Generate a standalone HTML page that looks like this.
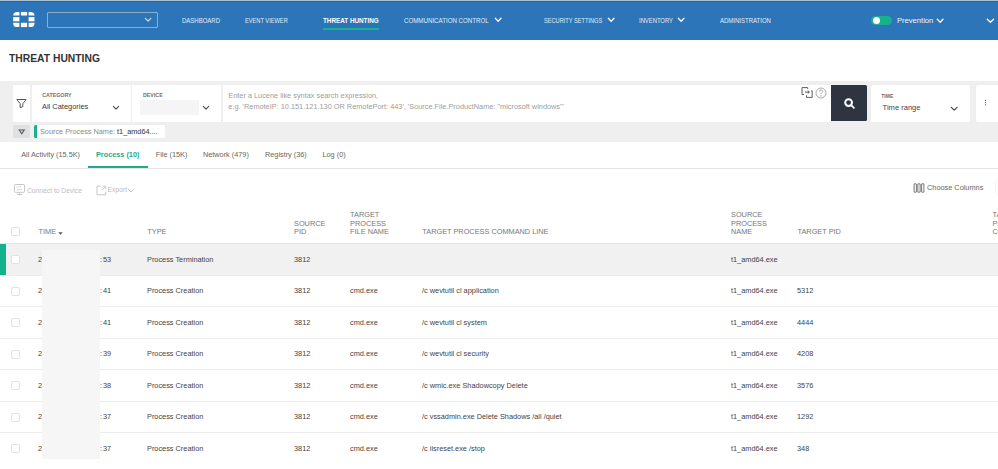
<!DOCTYPE html>
<html><head><meta charset="utf-8">
<style>
*{box-sizing:border-box;margin:0;padding:0}
html,body{width:998px;height:469px;overflow:hidden;background:#fff;font-family:"Liberation Sans",sans-serif;color:#444}
.a{position:absolute;white-space:nowrap}
#hdr{position:absolute;left:0;top:0;width:998px;height:40px;background:#2c75b8;border-top:1px solid #aac2d8;box-shadow:inset 0 1px 0 #1d66b1}
.nav{position:absolute;top:15.7px;font-size:7.4px;line-height:9px;transform-origin:0 0;white-space:nowrap}
.box{position:absolute;background:#fff;top:85px;height:36.5px}
.lbl{position:absolute;font-size:5.5px;font-weight:bold;color:#666;line-height:7px;white-space:nowrap}
.tab{position:absolute;top:150.1px;font-size:7.3px;color:#666;line-height:10px;white-space:nowrap}
.th{position:absolute;font-size:7.35px;color:#777;line-height:8.2px;white-space:nowrap}
.row{position:absolute;left:0;width:998px;border-bottom:1px solid #ececec}
.td{position:absolute;font-size:7.35px;color:#444;line-height:10px;white-space:nowrap}
.cb{position:absolute;left:10.5px;width:9px;height:9px;border:1px solid #e2e2e2;border-radius:2px;background:#fff}
</style></head><body>
<div id="hdr"></div>

<svg class="a" style="left:13px;top:11px" width="23" height="18" viewBox="0 0 23 18">
 <g fill="#fff">
  <path d="M4.2 0.9 H6.4 V4.5 H0.2 V4.6 Q0.2 0.9 4.2 0.9Z"/>
  <rect x="7.9" y="0.9" width="6.2" height="3.6"/>
  <path d="M15.6 0.9 H17.5 Q21.5 0.9 21.5 4.6 V4.5 H15.6Z"/>
  <rect x="0.2" y="6.1" width="6.2" height="4.2"/>
  <rect x="15.6" y="6.1" width="5.9" height="4.2"/>
  <path d="M0.2 11.8 H6.4 V16.1 H4.2 Q0.2 16.1 0.2 12.4Z"/>
  <rect x="7.9" y="11.8" width="6.2" height="4.3"/>
  <path d="M15.6 11.8 H21.5 V12.4 Q21.5 16.1 17.5 16.1 H15.6Z"/>
 </g></svg>
<div class="a" style="left:46.5px;top:12.3px;width:111.3px;height:16.2px;border:1px solid #8eaed0;border-radius:1px"></div>
<svg class="a" style="left:144.4px;top:16.9px" width="8.2" height="5.4" viewBox="-1 -1 8.2 5.4"><path d="M0.3 0.3 L3.1 3.1 L5.9 0.3" fill="none" stroke="#d5e2f0" stroke-width="1.1" stroke-linecap="round" stroke-linejoin="round"/></svg>
<div class="nav" style="left:181.6px;color:#e3ecf6;font-weight:normal;transform:scaleX(0.811)">DASHBOARD</div>
<div class="nav" style="left:244.6px;color:#e3ecf6;font-weight:normal;transform:scaleX(0.767)">EVENT VIEWER</div>
<div class="nav" style="left:323px;color:#fff;font-weight:bold;transform:scaleX(0.855)">THREAT HUNTING</div>
<div class="a" style="left:323px;top:27.5px;width:56px;height:2px;background:#19b48f"></div>
<div class="nav" style="left:403.8px;color:#e3ecf6;font-weight:normal;transform:scaleX(0.833)">COMMUNICATION CONTROL</div>
<svg class="a" style="left:494px;top:17.3px" width="8.3" height="5.5" viewBox="-1 -1 8.3 5.5"><path d="M0.3 0.3 L3.15 3.2 L6.0 0.3" fill="none" stroke="#fff" stroke-width="1.3" stroke-linecap="round" stroke-linejoin="round"/></svg>
<div class="nav" style="left:543.7px;color:#e3ecf6;font-weight:normal;transform:scaleX(0.764)">SECURITY SETTINGS</div>
<svg class="a" style="left:606.8px;top:17.3px" width="8.3" height="5.5" viewBox="-1 -1 8.3 5.5"><path d="M0.3 0.3 L3.15 3.2 L6.0 0.3" fill="none" stroke="#fff" stroke-width="1.3" stroke-linecap="round" stroke-linejoin="round"/></svg>
<div class="nav" style="left:638.9px;color:#e3ecf6;font-weight:normal;transform:scaleX(0.792)">INVENTORY</div>
<svg class="a" style="left:677px;top:17.3px" width="8.3" height="5.5" viewBox="-1 -1 8.3 5.5"><path d="M0.3 0.3 L3.15 3.2 L6.0 0.3" fill="none" stroke="#fff" stroke-width="1.3" stroke-linecap="round" stroke-linejoin="round"/></svg>
<div class="nav" style="left:720.4px;color:#e3ecf6;font-weight:normal;transform:scaleX(0.813)">ADMINISTRATION</div>
<div class="a" style="left:870.6px;top:15.8px;width:21.5px;height:9px;border-radius:4.5px;background:#17b28c"></div>
<div class="a" style="left:873px;top:16.8px;width:7px;height:7px;border-radius:50%;background:#fff"></div>
<div class="a" style="left:897px;top:15.5px;font-size:7.6px;color:#f2f6fb;line-height:10px">Prevention</div>
<svg class="a" style="left:935.7px;top:17.7px" width="8.3" height="5.5" viewBox="-1 -1 8.3 5.5"><path d="M0.3 0.3 L3.15 3.2 L6.0 0.3" fill="none" stroke="#fff" stroke-width="1.3" stroke-linecap="round" stroke-linejoin="round"/></svg>
<svg class="a" style="left:986.2px;top:17.7px" width="8.9" height="5.6" viewBox="-1 -1 8.9 5.6"><path d="M0.3 0.3 L3.45 3.3000000000000003 L6.6000000000000005 0.3" fill="none" stroke="#fff" stroke-width="1.3" stroke-linecap="round" stroke-linejoin="round"/></svg>
<div class="a" style="left:8.7px;top:50.5px;font-size:11.2px;font-weight:bold;color:#333;line-height:14px;transform-origin:0 0;transform:scaleX(0.922)">THREAT HUNTING</div>
<div class="a" style="left:0;top:81px;width:998px;height:61px;background:#efefef"></div>
<div class="box" style="left:13px;width:17px;border-radius:1px"></div>
<svg class="a" style="left:16px;top:97.5px" width="11" height="12" viewBox="0 0 11 12"><path d="M0.9 1.5 H10.1 Q9.8 2.2 6.8 5.6 V8.5 L4.2 9.7 V5.6 Q1.2 2.2 0.9 1.5 Z" fill="none" stroke="#555" stroke-width="1" stroke-linejoin="round"/></svg>
<div class="box" style="left:32px;width:99px"></div>
<div class="lbl" style="left:42.2px;top:91.8px;font-size:5.3px;color:#707070">CATEGORY</div>
<div class="a" style="left:42px;top:102.4px;font-size:7.45px;color:#3a3a3a;line-height:10px">All Categories</div>
<svg class="a" style="left:111.5px;top:104.6px" width="8" height="5.5" viewBox="-1 -1 8 5.5"><path d="M0.3 0.3 L3.0 3.2 L5.7 0.3" fill="none" stroke="#4a4a4a" stroke-width="1.05" stroke-linecap="round" stroke-linejoin="round"/></svg>
<div class="box" style="left:132px;width:89px"></div>
<div class="lbl" style="left:143px;top:91.8px;font-size:5.3px;color:#707070">DEVICE</div>
<div class="a" style="left:140px;top:100.4px;width:58.6px;height:14.3px;background:#f5f5f5;border-radius:1px"></div>
<svg class="a" style="left:201.7px;top:104.6px" width="8" height="5.5" viewBox="-1 -1 8 5.5"><path d="M0.3 0.3 L3.0 3.2 L5.7 0.3" fill="none" stroke="#4a4a4a" stroke-width="1.05" stroke-linecap="round" stroke-linejoin="round"/></svg>
<div class="box" style="left:223px;width:608.2px"></div>
<div class="a" style="left:228.3px;top:89.5px;font-size:7.35px;color:#9d9d9d;line-height:11.3px">Enter a Lucene like syntax search expression,<br>e.g. 'RemoteIP: 10.151.121.130 OR RemotePort: 443', 'Source.File.ProductName: "microsoft windows"'</div>
<svg class="a" style="left:801px;top:86px" width="13" height="13" viewBox="0 0 13 13">
 <path d="M6.7 2.9 V1.6 H1 V8.5 H3" fill="none" stroke="#5e5e5e" stroke-width="1"/>
 <path d="M3.9 6.1 H8.3 M6.7 4.5 L8.3 6.1 L6.7 7.7" fill="none" stroke="#555" stroke-width="1"/>
 <path d="M10 4.9 H11.2 V11.4 H5.5 V9.3" fill="none" stroke="#5e5e5e" stroke-width="1"/>
</svg>
<svg class="a" style="left:814.5px;top:86.5px" width="12" height="12" viewBox="0 0 12 12">
 <circle cx="6" cy="6" r="5" fill="none" stroke="#a0a0a0" stroke-width="0.9"/>
 <path d="M4.3 4.6 Q4.3 2.9 6 2.9 Q7.7 2.9 7.7 4.4 Q7.7 5.4 6.6 5.9 Q6 6.2 6 7.2" fill="none" stroke="#a0a0a0" stroke-width="0.9"/>
 <circle cx="6" cy="8.7" r="0.6" fill="#a0a0a0"/>
</svg>
<div class="a" style="left:831.2px;top:85px;width:36px;height:35.8px;background:#2e3440;border-radius:0 1.5px 1.5px 0"></div>
<svg class="a" style="left:842px;top:96px" width="14" height="14" viewBox="0 0 14 14">
 <circle cx="6.6" cy="6.6" r="3.4" fill="none" stroke="#fff" stroke-width="2"/>
 <path d="M9.2 9.2 L11.9 11.9" stroke="#fff" stroke-width="1.8" stroke-linecap="round"/>
</svg>
<div class="box" style="left:871px;width:99.3px;border-radius:2px"></div>
<div class="lbl" style="left:881.3px;top:92.8px;font-size:5px;color:#707070">TIME</div>
<div class="a" style="left:882.6px;top:103.4px;font-size:7.55px;color:#444;line-height:10px">Time range</div>
<svg class="a" style="left:949.8px;top:105.8px" width="8.4" height="5.5" viewBox="-1 -1 8.4 5.5"><path d="M0.3 0.3 L3.2 3.2 L6.1000000000000005 0.3" fill="none" stroke="#444" stroke-width="1.2" stroke-linecap="round" stroke-linejoin="round"/></svg>
<div class="box" style="left:975.5px;width:30px;border-radius:2px"></div>
<div class="a" style="left:984.6px;top:99.6px;width:1.8px;height:1.8px;background:#444;box-shadow:0 2.2px 0 #444,0 4.4px 0 #444"></div>
<div class="a" style="left:13.2px;top:125.2px;width:16.5px;height:12.6px;background:#dfe0e2;border-radius:1.5px"></div>
<svg class="a" style="left:18px;top:128.9px" width="7.5" height="6.5" viewBox="0 0 7.5 6.5"><path d="M1.2 1.0 H6.3 L3.75 4.9 Z" fill="none" stroke="#555" stroke-width="1.05" stroke-linejoin="miter"/></svg>
<div class="a" style="left:33.7px;top:125.2px;width:131.3px;height:12.6px;background:#fff;border-radius:1.5px"></div>
<div class="a" style="left:33.7px;top:125.2px;width:3.2px;height:12.6px;background:#17b08a;border-radius:1.5px 0 0 1.5px"></div>
<div class="a" style="left:40px;top:126.6px;font-size:7.3px;color:#8a8a8a;line-height:10px">Source Process Name: <span style="color:#333">t1_amd64....</span></div>
<div class="a" style="left:0;top:168px;width:998px;height:1px;background:#e6e6e6"></div>
<div class="tab" style="left:21.2px">All Activity (15.5K)</div>
<div class="tab" style="left:96px;color:#23a98a;font-weight:bold">Process (10)</div>
<div class="a" style="left:87.8px;top:166px;width:59.8px;height:2px;background:#20a98a"></div>
<div class="tab" style="left:155.7px">File (15K)</div>
<div class="tab" style="left:203px">Network (479)</div>
<div class="tab" style="left:265px">Registry (36)</div>
<div class="tab" style="left:322.5px">Log (0)</div>
<svg class="a" style="left:13px;top:183px" width="13" height="13" viewBox="0 0 13 13">
 <rect x="1.5" y="1.5" width="10" height="7.8" rx="0.8" fill="none" stroke="#c6c6c6" stroke-width="1"/>
 <path d="M6.5 9.5 V11.3 M3.8 11.5 H9.2" stroke="#c6c6c6" stroke-width="1"/>
 <path d="M3.5 4 H8 M7 3.2 L8.2 4 M4 6.5 H9 M5 7.3 L3.8 6.5" stroke="#cfcfcf" stroke-width="0.7" fill="none"/>
</svg>
<div class="a" style="left:27px;top:186.3px;font-size:6.9px;color:#bdbdbd;line-height:10px;transform-origin:0 0;transform:scaleX(0.975)">Connect to Device</div>
<svg class="a" style="left:95.5px;top:184.5px" width="11" height="11" viewBox="0 0 11 11">
 <path d="M4.5 1 H1 V9.8 H9.8 V6.5" fill="none" stroke="#c6c6c6" stroke-width="1"/>
 <path d="M6 5 L9.5 1.5 M6.8 1.2 H9.8 V4.2" fill="none" stroke="#c6c6c6" stroke-width="0.9"/>
</svg>
<div class="a" style="left:107.5px;top:185.2px;font-size:6.75px;color:#bdbdbd;line-height:10px">Export</div>
<svg class="a" style="left:127px;top:187.6px" width="7.8" height="5.3" viewBox="-1 -1 7.8 5.3"><path d="M0.3 0.3 L2.9 3.0 L5.5 0.3" fill="none" stroke="#c2c2c2" stroke-width="1.0" stroke-linecap="round" stroke-linejoin="round"/></svg>
<svg class="a" style="left:913px;top:183px" width="12" height="10" viewBox="0 0 12 10">
 <rect x="1.1" y="0.8" width="2.3" height="8.4" rx="0.3" fill="none" stroke="#666" stroke-width="0.9"/>
 <rect x="4.85" y="0.8" width="2.3" height="8.4" rx="0.3" fill="none" stroke="#666" stroke-width="0.9"/>
 <rect x="8.6" y="0.8" width="2.3" height="8.4" rx="0.3" fill="none" stroke="#666" stroke-width="0.9"/>
</svg>
<div class="a" style="left:927px;top:183.4px;font-size:7.35px;color:#666;line-height:10px">Choose Columns</div>
<div class="a" style="left:994.6px;top:178.8px;width:20px;height:16.5px;border:1px solid #f4f4f4;border-radius:3px"></div>
<div class="cb" style="left:10.5px;top:227.2px"></div>
<div class="th" style="left:38.5px;top:228.2px">TIME</div>
<svg class="a" style="left:58.2px;top:231.6px" width="5" height="3" viewBox="0 0 5 3"><path d="M0.3 0.2 H4.7 L2.5 2.8Z" fill="#555"/></svg>
<div class="th" style="left:147.3px;top:228.2px">TYPE</div>
<div class="th" style="left:294px;top:219.7px">SOURCE<br>PID</div>
<div class="th" style="left:350.1px;top:211.4px">TARGET<br>PROCESS<br>FILE NAME</div>
<div class="th" style="left:422.3px;top:228.2px">TARGET PROCESS COMMAND LINE</div>
<div class="th" style="left:731px;top:211.4px">SOURCE<br>PROCESS<br>NAME</div>
<div class="th" style="left:797.5px;top:228.2px">TARGET PID</div>
<div class="th" style="left:992.5px;top:211.4px">TARGET<br>PROCESS<br>COMMAND</div>
<div class="a" style="left:0;top:243px;width:998px;height:1px;background:#e6e6e6"></div>
<div class="row" style="top:244.00px;height:31.57px;background:#f1f1f1;"></div>
<div class="cb" style="top:255.00px"></div>
<div class="td" style="left:38px;top:254.50px">2</div>
<div class="td" style="left:99.9px;top:254.50px">:</div>
<div class="td" style="left:103.0px;top:254.50px">53</div>
<div class="td" style="left:147px;top:254.50px">Process Termination</div>
<div class="td" style="left:294px;top:254.50px">3812</div>
<div class="td" style="left:731px;top:254.50px">t1_amd64.exe</div>
<div class="row" style="top:275.57px;height:31.57px;background:#fff;"></div>
<div class="cb" style="top:286.57px"></div>
<div class="td" style="left:38px;top:286.07px">2</div>
<div class="td" style="left:99.9px;top:286.07px">:</div>
<div class="td" style="left:103.0px;top:286.07px">41</div>
<div class="td" style="left:147px;top:286.07px">Process Creation</div>
<div class="td" style="left:294px;top:286.07px">3812</div>
<div class="td" style="left:350px;top:286.07px">cmd.exe</div>
<div class="td" style="left:422px;top:286.07px">/c wevtutil cl application</div>
<div class="td" style="left:731px;top:286.07px">t1_amd64.exe</div>
<div class="td" style="left:797px;top:286.07px">5312</div>
<div class="row" style="top:307.14px;height:31.57px;background:#fff;"></div>
<div class="cb" style="top:318.14px"></div>
<div class="td" style="left:38px;top:317.64px">2</div>
<div class="td" style="left:99.9px;top:317.64px">:</div>
<div class="td" style="left:103.0px;top:317.64px">41</div>
<div class="td" style="left:147px;top:317.64px">Process Creation</div>
<div class="td" style="left:294px;top:317.64px">3812</div>
<div class="td" style="left:350px;top:317.64px">cmd.exe</div>
<div class="td" style="left:422px;top:317.64px">/c wevtutil cl system</div>
<div class="td" style="left:731px;top:317.64px">t1_amd64.exe</div>
<div class="td" style="left:797px;top:317.64px">4444</div>
<div class="row" style="top:338.71px;height:31.57px;background:#fff;"></div>
<div class="cb" style="top:349.71px"></div>
<div class="td" style="left:38px;top:349.21px">2</div>
<div class="td" style="left:99.9px;top:349.21px">:</div>
<div class="td" style="left:103.0px;top:349.21px">39</div>
<div class="td" style="left:147px;top:349.21px">Process Creation</div>
<div class="td" style="left:294px;top:349.21px">3812</div>
<div class="td" style="left:350px;top:349.21px">cmd.exe</div>
<div class="td" style="left:422px;top:349.21px">/c wevtutil cl security</div>
<div class="td" style="left:731px;top:349.21px">t1_amd64.exe</div>
<div class="td" style="left:797px;top:349.21px">4208</div>
<div class="row" style="top:370.28px;height:31.57px;background:#fff;"></div>
<div class="cb" style="top:381.28px"></div>
<div class="td" style="left:38px;top:380.78px">2</div>
<div class="td" style="left:99.9px;top:380.78px">:</div>
<div class="td" style="left:103.0px;top:380.78px">38</div>
<div class="td" style="left:147px;top:380.78px">Process Creation</div>
<div class="td" style="left:294px;top:380.78px">3812</div>
<div class="td" style="left:350px;top:380.78px">cmd.exe</div>
<div class="td" style="left:422px;top:380.78px">/c wmic.exe Shadowcopy Delete</div>
<div class="td" style="left:731px;top:380.78px">t1_amd64.exe</div>
<div class="td" style="left:797px;top:380.78px">3576</div>
<div class="row" style="top:401.85px;height:31.57px;background:#fff;"></div>
<div class="cb" style="top:412.85px"></div>
<div class="td" style="left:38px;top:412.35px">2</div>
<div class="td" style="left:99.9px;top:412.35px">:</div>
<div class="td" style="left:103.0px;top:412.35px">37</div>
<div class="td" style="left:147px;top:412.35px">Process Creation</div>
<div class="td" style="left:294px;top:412.35px">3812</div>
<div class="td" style="left:350px;top:412.35px">cmd.exe</div>
<div class="td" style="left:422px;top:412.35px">/c vssadmin.exe Delete Shadows /all /quiet</div>
<div class="td" style="left:731px;top:412.35px">t1_amd64.exe</div>
<div class="td" style="left:797px;top:412.35px">1292</div>
<div class="row" style="top:433.42px;height:31.57px;background:#fff;border-bottom:0"></div>
<div class="cb" style="top:444.42px"></div>
<div class="td" style="left:38px;top:443.92px">2</div>
<div class="td" style="left:99.9px;top:443.92px">:</div>
<div class="td" style="left:103.0px;top:443.92px">37</div>
<div class="td" style="left:147px;top:443.92px">Process Creation</div>
<div class="td" style="left:294px;top:443.92px">3812</div>
<div class="td" style="left:350px;top:443.92px">cmd.exe</div>
<div class="td" style="left:422px;top:443.92px">/c iisreset.exe /stop</div>
<div class="td" style="left:731px;top:443.92px">t1_amd64.exe</div>
<div class="td" style="left:797px;top:443.92px">348</div>
<div class="a" style="left:0;top:244px;width:6px;height:31.3px;background:#13b28b"></div>
<div class="a" style="left:42px;top:250.2px;width:58px;height:209.1px;background:#f6f6f6"></div>
</body></html>
